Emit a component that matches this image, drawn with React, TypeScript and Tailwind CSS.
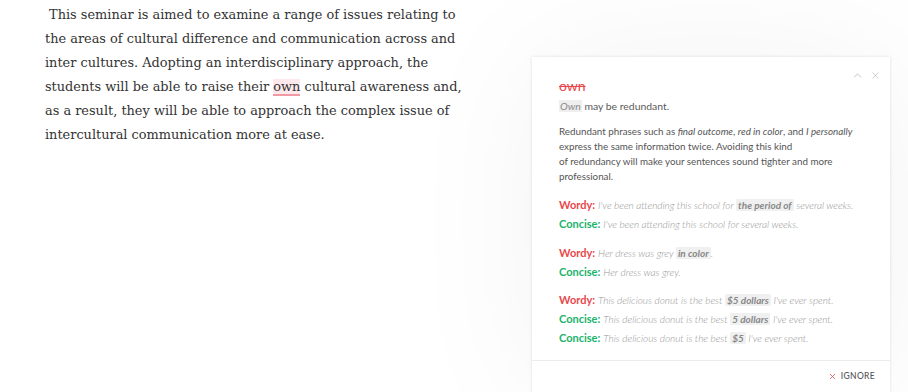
import { ChevronUp, X } from 'lucide-react'

const lato = { fontFamily: 'Lato, "Open Sans", sans-serif' }

function Mark({ children }: { children: React.ReactNode }) {
  return <span className="rounded-[1px] bg-[#f0f0f0] px-[2px] font-bold text-[#888]">{children}</span>
}

function Example({ kind, children }: { kind: 'wordy' | 'concise'; children: React.ReactNode }) {
  return (
    <div className="flex h-[19px] items-baseline gap-[3px] leading-[19px]">
      {kind === 'wordy' ? (
        <span className="text-[11px] font-bold text-[#e8474c]">Wordy:</span>
      ) : (
        <span className="text-[11px] font-bold text-[#20b36b]">Concise:</span>
      )}
      <span className="text-[10px] font-light italic text-[#969696]">{children}</span>
    </div>
  )
}

export default function App() {
  return (
    <div className="flex h-[392px] w-[908px] overflow-hidden bg-white">
      <div className="w-[532px] shrink-0 pl-[45px] pt-[3px]">
        <p
          className="text-[12.9px] leading-[24px] text-[#333]"
          style={{ fontFamily: '"DejaVu Serif", "Liberation Serif", serif' }}
        >
          &nbsp;This seminar is aimed to examine a range of issues relating to
          <br />
          the areas of cultural difference and communication across and
          <br />
          inter cultures. Adopting an interdisciplinary approach, the
          <br />
          students will be able to raise their{' '}
          <span className="border-b-2 border-[#f29aa3] bg-[#fde9ec]">own</span> cultural awareness and,
          <br />
          as a result, they will be able to approach the complex issue of
          <br />
          intercultural communication more at ease.
        </p>
      </div>

      <div
        className="relative mt-[57px] w-[358px] shrink-0 bg-white shadow-[0_0_140px_rgba(0,0,0,0.05),0_0_3px_rgba(0,0,0,0.12)]"
        style={lato}
      >
        <div className="absolute right-[9px] top-[12px] flex items-center gap-[6px] text-[#adadad]">
          <ChevronUp size={13} strokeWidth={1.3} />
          <X size={11} strokeWidth={1.3} />
        </div>

        <div className="px-[27px] pb-[13px] pt-[21px]">
          <p className="text-[14px] leading-[16px] text-[#e8474c] line-through">own</p>
          <p className="mt-[4px] text-[10.4px] leading-[16px] text-[#5a5a5a]">
            <span className="bg-[#efefef] px-[1px] italic text-[#8a8a8a]">Own</span> may be redundant.
          </p>
          <p className="mt-[10px] text-[9.8px] leading-[15px] text-[#555]">
            Redundant phrases such as <i>final outcome</i>, <i>red in color</i>, and <i>I personally</i>
            <br />
            express the same information twice. Avoiding this kind
            <br />
            of redundancy will make your sentences sound tighter and more
            <br />
            professional.
          </p>

          <div className="mt-[11px]">
            <Example kind="wordy">
              I've been attending this school for <Mark>the period of</Mark> several weeks.
            </Example>
            <Example kind="concise">I've been attending this school for several weeks.</Example>
          </div>
          <div className="mt-[10px]">
            <Example kind="wordy">
              Her dress was grey <Mark>in color</Mark>.
            </Example>
            <Example kind="concise">Her dress was grey.</Example>
          </div>
          <div className="mt-[9px]">
            <Example kind="wordy">
              This delicious donut is the best <Mark>$5 dollars</Mark> I've ever spent.
            </Example>
            <Example kind="concise">
              This delicious donut is the best <Mark>5 dollars</Mark> I've ever spent.
            </Example>
            <Example kind="concise">
              This delicious donut is the best <Mark>$5</Mark> I've ever spent.
            </Example>
          </div>
        </div>

        <div className="flex h-[31px] items-center justify-end border-t border-[#ececec] pr-[15px]">
          <button className="flex items-center gap-[4px] text-[8.5px] font-medium uppercase tracking-[0.04em] text-[#555]">
            <X size={9} strokeWidth={2} className="text-[#e8474c]" />
            Ignore
          </button>
        </div>
      </div>
    </div>
  )
}
